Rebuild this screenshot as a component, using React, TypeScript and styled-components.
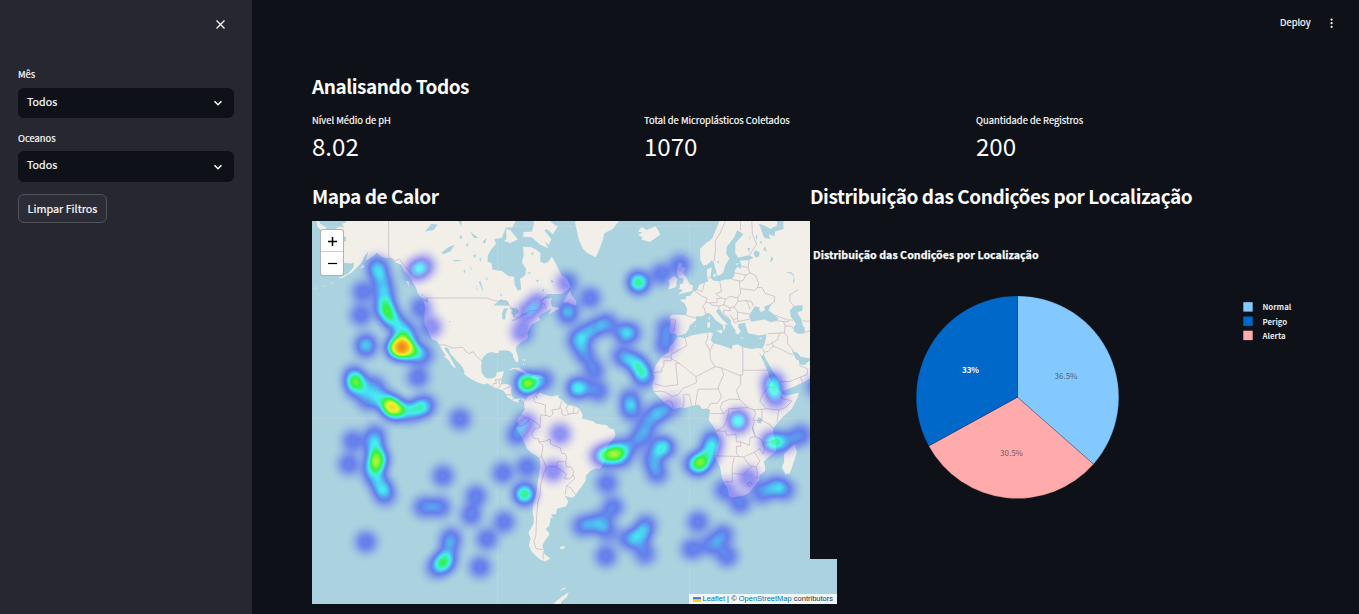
import React from 'react';
import styled, { createGlobalStyle } from 'styled-components';

const FONT = '"Noto Sans CJK SC", "Noto Sans", sans-serif';

const GlobalStyle = createGlobalStyle`
  *, *::before, *::after { box-sizing: border-box; }
  body { margin: 0; background: #0e1117; color: #fafafa; font-family: ${FONT}; overflow: hidden; }
  h2, h3, p { margin: 0; }
`;

const Page = styled.div`
  display: flex;
  width: 100%;
  height: 614px;
  overflow: hidden;
`;

const Sidebar = styled.aside`
  flex: 0 0 252px;
  background: #262730;
  padding: 18px 18px 0;
  display: flex;
  flex-direction: column;
  align-items: stretch;
`;

const CloseRow = styled.div`
  display: flex;
  justify-content: flex-end;
  height: 50px;
  padding: 1px 8px 0 0;
`;

const FieldLabel = styled.label<{ $h: number }>`
  font-size: 9.4px;
  line-height: 13px;
  height: ${(p) => p.$h}px;
  -webkit-text-stroke: 0.2px #fafafa;
`;

const Select = styled.div<{ $gap: number; $h: number }>`
  display: flex;
  align-items: center;
  justify-content: space-between;
  height: ${(p) => p.$h}px;
  margin-bottom: ${(p) => p.$gap}px;
  padding: 0 11px 0 9px;
  border-radius: 6px;
  background: #0e1117;
  font-size: 10.7px;
  line-height: 18px;
  -webkit-text-stroke: 0.2px #fafafa;
  & > span { padding-bottom: ${(p) => p.$h - 28}px; }
`;

const ClearButton = styled.button`
  align-self: flex-start;
  width: 89px;
  height: 29px;
  padding: 0 0 2px;
  border: 1px solid #52535b;
  border-radius: 6px;
  background: #2b2c36;
  color: #fafafa;
  font: 400 10.8px/18px ${FONT};
  white-space: nowrap;
  -webkit-text-stroke: 0.2px #fafafa;
`;

const Main = styled.main`
  flex: 1;
  min-width: 0;
  display: flex;
  flex-direction: column;
`;

const Toolbar = styled.header`
  display: flex;
  justify-content: flex-end;
  align-items: center;
  gap: 16px;
  height: 46px;
  padding-right: 22.5px;
  font-size: 9.3px;
  -webkit-text-stroke: 0.2px #fafafa;
  & > span { padding-bottom: 2px; }
`;

const Content = styled.div`
  padding: 24px 48px 0 60px;
`;

const Heading = styled.h2`
  font-size: 19px;
  font-weight: 700;
  line-height: 32px;
  letter-spacing: -0.45px;
  white-space: nowrap;
  color: #fafafa;
`;

const Metrics = styled.div`
  display: grid;
  grid-template-columns: repeat(3, 332px);
  padding-top: 11px;
  height: 78px;
`;

const MetricLabel = styled.p`
  font-size: 9.4px;
  line-height: 15px;
  -webkit-text-stroke: 0.2px #fafafa;
`;

const MetricValue = styled.p`
  font-size: 24.1px;
  line-height: 36px;
`;

const Panels = styled.div`
  display: grid;
  grid-template-columns: 498px 498px;
`;

const Panel = styled.section`
  min-width: 0;
`;

const MapFrame = styled.div`
  position: relative;
  width: 525px;
  height: 383px;
  margin-top: 9px;
  overflow: hidden;
  background: #aad3df;
  & > svg { display: block; }
`;

const ZoomControl = styled.div`
  position: absolute;
  left: 8px;
  top: 8px;
  width: 24px;
  border: 1px solid rgba(0, 0, 0, 0.3);
  border-radius: 3px;
  background: #fff;
`;

const ZoomButton = styled.div`
  display: flex;
  align-items: center;
  justify-content: center;
  height: 21px;
  padding-top: 1px;
  & + & { height: 24px; padding: 0 0 1px; border-top: 1px solid #ccc; }
`;

const Attribution = styled.div`
  position: absolute;
  right: 0;
  bottom: 0;
  display: flex;
  align-items: center;
  height: 10px;
  padding: 0 4px;
  background: rgba(255, 255, 255, 0.8);
  color: #333;
  font: 7.5px/10px "Liberation Sans", Arial, sans-serif;
  white-space: pre;
  & svg { margin-right: 2px; }
`;

const MapLink = styled.span`
  color: #0078a8;
`;

const ChartFrame = styled.div`
  position: relative;
  z-index: 1;
  height: 338px;
  margin-top: 9px;
  background: #0e1117;
  & > svg { display: block; }
`;

/* Web Mercator, 768px around the world. */
const project = (pair: string) => {
  const [lon, lat] = pair.split(',').map(Number);
  const x = 689.5 + (lon * 768) / 360;
  const y = 418.3 - 122.23 * Math.log(Math.tan(Math.PI / 4 + (lat * Math.PI) / 360));
  return `${x.toFixed(1)},${y.toFixed(1)}`;
};
const path = (line: string) => 'M' + line.trim().split(/\s+/).map(project).join('L');

const LAND = [
  '-160,68.5 -161,67.2 -163,67 -161.8,66.3 -164,66.5 -168,65.6 -166,64.5 -161,64.5 -161,63.6 -164.5,63.1 -166,61.7 -165,60.6 -162.5,59.9 -162,58.7 -158.8,58.5 -157.2,58.8 -157.5,57.5 -160,56 -164.8,54.7 -163,54.8 -160,55.7 -158.4,56.2 -156,57.5 -154,58.5 -153.3,59.2 -152,60.5 -150.5,61.3 -151.8,59.2 -149,60 -146.5,61 -144,60 -140,59.8 -137.5,58.7 -135,58.2 -133.5,56.5 -131,55 -130,54 -128,51.8 -127.5,50.8 -124.5,49.5 -122.8,49 -122.4,47.4 -124.7,48.3 -124,46 -124.3,43 -124.2,40.5 -122.5,37.8 -121.8,36.5 -120.6,34.6 -118.5,34 -117.1,32.5 -116,30.5 -114.8,29 -114.2,28 -115,27.8 -113.5,26.8 -112.2,25.5 -112,24.6 -110.2,23 -109.5,23.2 -110.3,24.3 -111.3,26 -112.5,28 -114.7,30.8 -114.7,31.7 -113,31.2 -112.2,29 -110.5,27.5 -109.3,26 -108,25 -106.3,23.2 -105.5,21.5 -105.5,20.3 -104.3,19.2 -102,17.9 -99.8,16.8 -96.5,15.7 -94.7,16.2 -92.3,14.6 -90,13.8 -87.7,13 -85.8,11.2 -85.5,10 -83.7,9 -83,8.2 -81,7.6 -80,7.4 -80.3,8.3 -79,9 -78,8.2 -77.4,7 -77.5,5.5 -77.2,4 -78.8,2 -78.9,1 -80,0.5 -80.8,-1.5 -80,-3 -81.3,-4.5 -80,-6.5 -78.8,-8.5 -77.5,-11 -76.3,-13.8 -74,-16 -71,-17.7 -70.3,-18.5 -70,-22 -70.5,-25 -71.2,-29 -71.6,-32 -72.5,-35.5 -73.5,-38 -73.5,-41 -73,-42 -73,-44 -74.5,-46 -75.5,-47 -74.5,-49 -75.3,-51 -74,-52.8 -72,-54 -70,-55 -67.5,-55.6 -65.2,-54.8 -68,-53.5 -68.4,-52.3 -69,-51 -67.6,-49.5 -65.8,-48 -66,-47 -67.4,-46 -65.8,-45 -65.3,-43.5 -65,-42 -63.8,-42.5 -65,-41 -62.5,-40.9 -62.2,-39 -58,-38.2 -56.8,-36.5 -57.3,-35.5 -58.4,-34.2 -57,-34.5 -55,-34.9 -53.5,-33.9 -52,-32 -50.2,-30 -48.7,-28.2 -48.6,-26 -46.5,-24 -44.5,-23 -42,-22.9 -41,-21.8 -39.7,-19.5 -39.1,-17 -38.8,-13.5 -37,-11 -35.2,-9 -34.8,-7.5 -35.4,-5.2 -37.2,-4.8 -39,-3.2 -41.5,-2.9 -44,-2.5 -45,-1.5 -48,-0.7 -50.5,-0.2 -50,1.5 -51.5,4.3 -54,5.9 -57,6 -59,8 -61.5,9.8 -62,10.7 -64.5,10.1 -66.5,10.6 -68.5,11.2 -70,12 -71.5,11 -71.7,12.3 -74.5,11 -75.5,10.5 -76.8,8.5 -78.5,9.4 -80,9.3 -82,9 -83.5,10.5 -83.6,13 -83.3,15 -85.5,15.9 -88.3,15.8 -88.2,18 -87.4,20 -87,21.5 -90.3,21.1 -90.7,19.3 -92,18.6 -94.5,18.2 -96,19 -97.4,21 -97.7,23.5 -97.2,27 -95,29 -93,29.7 -90.8,29.2 -89.3,29.3 -89.4,30.3 -86,30.4 -84.2,30 -82.8,28.8 -82.6,27.5 -81.5,25.8 -80.5,25.2 -80.1,27 -81.4,30.5 -81,32 -78.8,33.7 -76.5,34.8 -75.7,35.5 -76,37 -75.2,38.5 -74,40.2 -72,41 -70,41.8 -70.7,43 -69,44 -67,44.8 -66,45.2 -64.5,45.6 -66,43.7 -64,44.6 -61,45.5 -61.5,46 -64.5,46.3 -65,48 -64.5,49 -68,48.7 -71,47 -69,48.7 -66.5,50.2 -60,50.2 -57,51.5 -55.8,52.5 -57.5,54.5 -60,55.5 -62,57.8 -64.5,60.2 -66,59 -68,58.5 -70,59 -69.8,61 -72,61.8 -74,62.3 -78,62.4 -77.7,60.5 -78.5,58.8 -76.6,57.2 -77,55.5 -79.5,54.5 -79,52.5 -79,51.4 -80.5,51.3 -82,52.9 -82.2,55.1 -85,55.3 -88,56.6 -92.5,57 -92.7,58.6 -94.7,59 -94.5,60.5 -93,61.8 -90.7,63 -91.5,64 -88,64.2 -87,65.3 -86,66.3 -83,66.3 -81.5,67.5 -82,69.5 -85,70 -90,72 -160,72',
  '-175,68.5 -173,67 -170,66.2 -172,65.5 -174.5,66.5',
  '-80,72 -72,70 -68,68.5 -64,67 -61.8,66.5 -64,65 -67,66 -68,65.7 -64.8,64 -66,62.8 -68,63.5 -66,62 -70,62.8 -74,64.4 -78,64.5 -77.8,65.4 -73.8,65.5 -73,67 -73,68.3 -77,69.8 -85,72',
  '-87,63.6 -84,63.2 -80.5,63.9 -84,65.8 -86,66 -85.8,64',
  '-56,72 -54,69.5 -53.5,67 -52,64 -50,62 -48,61 -44,60 -42.5,61.5 -40.5,64 -40,65.2 -36,66 -32,68 -25,69 -20,72',
  '-24.3,65.5 -22.3,66.4 -20.3,65.8 -16,66.5 -14.7,65.8 -13.7,64.9 -18.7,63.4 -22.6,63.9 -22,64.3 -24,64.9 -22,65.3',
  '-59.3,47.7 -57,47.6 -55,46.9 -53.1,46.7 -53,48 -55.5,50 -56,51.5 -58,49',
  '-128,50.8 -125,50 -123.3,48.5 -126,49.3',
  '-133,54 -131.7,54 -131.2,52.2',
  '-154.5,57.2 -152.3,57.6 -153,58.3',
  '-84.9,21.9 -83,23 -80,23.1 -77,21.5 -74.2,20.2 -77.5,19.9 -78,20.8 -82,22.6',
  '-74.4,18.4 -73.3,19.9 -70,19.8 -68.4,18.6 -71,18',
  '-78.3,18.3 -76.3,18.2 -77,17.8', '-67.2,18.4 -65.7,18.4 -66,18', '-78.2,25 -77.9,24 -77.5,24.8', '-78.7,26.7 -77,26.6 -77.2,25.9',
  '-5.5,50.1 1.3,51.1 1.6,52.7 0.2,53 -1.5,55 -3,56 -2,57.6 -4,57.7 -3.2,58.6 -5,58.6 -6,56.5 -4.8,54.8 -3,54.8 -3,53.4 -4.5,53 -4.5,52 -5.2,51.8 -3,51.4',
  '-10,51.6 -6.4,52.2 -6,53.8 -5.6,54.6 -7.4,55.3 -10,54.2 -9.2,53.1',
  '20,72 15,68.5 12.5,66 10.5,64 8,63.3 5,62 5,59.5 6.5,58 8.3,58.2 10.5,59.3 11.3,58.9 12.5,56.5 13,55.4 14.3,55.6 16,56.3 16.7,58 18.8,59.8 17.2,60.8 17.5,62.4 21,64.4 22.3,65.8 25.3,65 21.5,63.2 21.4,61 22.8,59.9 28,60.5 30,59.9 28,59.4 23.5,59.2 24.3,58.3 24.2,57.1 22.6,57.7 21.2,56.8 21,55.3 19.8,54.5 16,54.3 14,53.9 11,54.1 9.8,55 10.5,57.6 8.2,57 8.3,55 8.8,53.9 7,53.4 4.7,53 3.5,51.4 1.6,50.8 0.2,49.6 -1.6,49.6 -1.5,48.6 -4.6,48.5 -2.2,47.2 -1.1,45.5 -1.6,43.4 -8,43.7 -9.2,43 -8.8,41 -9.4,38.7 -8.9,37 -6.4,36.8 -5.5,36 -2,36.8 -0.4,38.5 -0.2,39.7 3.1,41.8 3,43.1 6,43.1 8.8,44.4 10.3,43.5 12.2,41.8 15.6,40 16,38 16.8,39 16.8,40.4 18.4,40 16,41.6 13.7,43.5 12.4,44.8 13.6,45.6 14.5,45.2 16,43.5 19.4,41.8 19.4,40.4 21.5,38.2 21.5,37 23,36.5 24,37.8 22.8,39.3 23,40.5 26,40.8 26.3,39.8 27,38 27.5,37 30.5,36.5 32.5,36.1 36,36.7 35.8,35 34.8,32 33.8,31.1 32,31.3 29,30.9 25,31.6 22.5,32.8 20,32.3 20,30.8 15.5,32.2 11.2,33.3 10,34.2 11,37 9.5,37.3 5,36.8 0,35.9 -2,35.1 -5.5,35.8 -6.8,34 -9.6,31.5 -9.8,29.7 -13,27.7 -16,23.9 -17,21 -16.3,19 -17.5,14.7 -16.8,12.4 -13.3,9 -11.4,6.9 -7.5,4.4 -4,5.2 -2,4.8 1,5.9 4.4,6.3 6,4.3 8.5,4.6 9.6,3.9 9.3,1 9,-0.8 12,-5 12.3,-6.1 13.4,-8.7 13.7,-11 12.5,-13.5 11.8,-17.5 14.4,-22.5 15.2,-27 18.2,-32 18.4,-34.2 20,-34.8 25.6,-34 28,-32.9 31.2,-29.5 32.8,-27.5 32.8,-25.8 35.4,-24 35.4,-22 34.8,-19.8 37,-17.8 40.5,-15.5 40.6,-11 39.3,-7.5 39.2,-4.8 41.5,-1.8 44,1 48,4.5 51,10.5 51.2,11.9 45,10.5 43.2,11.5 43,12.7 39.5,15.3 37.3,19 37,21 35.5,24 33.5,27.8 32.5,29.8 34,27.8 35,29.5 35,28 39,21.5 42.8,16.5 43.4,12.7 45,13 52,16 55,17.5 57.5,19 59.8,22.4 56.5,24.5 56.3,26.2 54,24.2 51.5,24.4 51.3,26 50,26.7 48,30 50.5,29.5 52,27.8 56.5,27 57.3,25.7 66,25.3 70,25 70,72',
  '49.3,-12 50.4,-15.7 47,-25 45,-25.5 43.3,-22.5 44.4,-20 44.3,-16.5',
  '8.3,41 9.6,41 9.6,39.2 8.5,39', '8.7,42.6 9.5,43 9.4,41.5', '12.5,38 15.5,38.2 15.1,36.8', '23.6,35.4 26.2,35.2 24,35', '32.4,35 34.4,35.6 33.5,34.7', '2.4,39.6 3.3,39.8 3,39.3',
  '10.8,55.6 12.5,56 12,54.9', '22,58.6 23.2,58.6 22,58',
  '-61,-51.8 -60,-51.3 -58,-51.5 -59.5,-52.2',
  '-64.5,-66 -63,-64.9 -60,-63.9 -56.6,-62.9 -57.5,-63.9 -60,-64.8 -61,-66', '-61,-62.6 -59.8,-62.2 -58,-61.8 -58.2,-62.2',
  '-166.5,53.8 -168.5,53 -167,53.4', '-171,52.7 -172.5,52.3 -171,52.4', '-174,52.2 -176.8,51.8 -175,51.9', '-171,63.5 -169,63.2 -171,63.2',
  '-61.8,10.7 -61,10.8 -61.2,10.1', '-16.8,28.2 -16.2,28.5 -16.4,28', '-14,28.6 -13.8,28.9 -14,28.2', '-1.5,60.4 -1,60.5 -1.2,60',
];

const WATER = [
  '27.9,42.8 28.7,44.3 30.7,46.4 33,46 32.6,45.4 33.5,44.5 35.4,45.2 35,46.3 38.5,47.2 37.6,46 37,45 39,44 41.5,42.4 41.5,41.5 38,41 35,42 32,41.6 29,41.2',
  '47,45 49,46.5 53,46.8 53,45 51,44.5 50.5,44.4 52.5,42 53,40 54,39 54,37 51,36.7 49,37.6 49,39.5 50,40.4 48.5,42 47.5,43',
  '41,66.7 38,66 35,66.7 32.5,67 35,64.3 38,64 37,65 40,64.6 40,65.5 44,66 44,69 41,68',
  '30,61 31,61.6 32.8,61.2 32.6,60.2 31,59.9', '34.5,61.8 35.5,62.5 36.3,61.2', '12.8,58.8 13.8,59.3 13.6,58.5', '27,62 28.5,62.2 28,61.3',
  '28,64.5 28.6,64.6 28.3,63.8', '31,64.5 31.8,65 31.6,63.6', '33,63.5 34,63.6 33.6,62.8', '38.5,60.4 39.2,59.4 37.8,58.8',
  '45,56.2 47.5,56 49,55.2 49.3,54 48.4,53 49,55.6 47.6,56.4',
  '-92,46.7 -88.5,48.6 -85,47.9 -84.6,46.6 -87.5,46.7', '-87.8,42 -86.3,42 -86.2,44 -85,45.8 -87,45.7 -87.8,44', '-84.5,46 -81,45.8 -80,44.6 -81.7,43.3 -82.5,43.2 -83.6,44 -83.3,45.2', '-83.4,41.7 -79,42.8 -80,42.2 -82.5,41.4', '-79.7,43.3 -76.3,44 -76.5,43.5',
  '-124,65.5 -121,67 -118,66.8 -120,65.8', '-116.5,61 -113,62.3 -110,62.8 -112,61.4 -115,60.8', '-111,59.4 -106,59.4 -109.5,59', '-98.8,53.8 -97.5,52 -96.6,50.5 -97,52 -97.9,53.9', '-100,52.8 -99,51 -99.8,51.8', '-103,58.2 -101.7,56.7 -102.4,57',
  '-108,64.2 -107,65 -106.6,64', '-105,62.8 -103.6,63.2 -104,62.4', '-101.4,60.5 -100,60.8 -100.6,59.8', '-98.6,59.6 -97.6,59.8 -98,58.9', '-106,56.6 -105,57.2 -105.4,56', '-95.5,54.6 -94.5,55 -95,54', '-88.8,50.4 -87.8,50 -88.6,49.4', '-76,56.2 -74.4,56.4 -75,55.8', '-72,54.2 -70.6,54.4 -71.2,53.5', '-65,54.4 -63.6,53.8 -64.6,53.4', '-74.4,61 -73,61.2 -73.6,60.4', '-69,51.8 -68,51.4 -68.8,50.8', '-112.8,41.5 -112,41.4 -112.4,40.8',
  '-116,72 -115,68.2 -109,67.8 -107,66.6 -106.5,68.5 -98,67.8 -95,68.2 -96,72', '-103,65.5 -99,64.3 -101,64.2', '-97,63.5 -95,64.2 -96,63',
  '32,0.5 34,0.2 33.6,-2.5 31.8,-2.2', '29.3,-3.5 30,-5 31,-8.5 29.5,-6', '34,-10 34.8,-12 35.2,-14.3 34.4,-12.5', '58.3,45 60,46 61,45.2 59,43.8',
  '-71.8,10.6 -71.2,10.6 -71.3,9.3 -72,9.6',
];

const BORDERS = [
  '-141,72 -141,60 -138,59.2 -136,59.6 -133,57.5 -130,56', '-123,49 -95,49 -92,48.3 -89.5,48 -86,48.2 -84.3,46.5 -82.4,45.3 -82.4,42.8 -79,42.8 -79,43.4 -76,44.3 -74.7,45 -71.5,45 -70.3,45.8 -69.2,47.4 -67.8,47 -67,45',
  '-117,32.5 -114.8,32.5 -111,31.3 -108,31.4 -106.5,31.7 -104.5,29.6 -103,29 -101.5,29.8 -99.5,27.5 -97.2,25.9',
  '-92.2,14.6 -92,16 -90.5,16.2 -91,17.8 -89.2,17.8 -88.3,18.4', '-89.2,17.8 -89.2,15.9 -88.3,15.8', '-90,13.8 -89.3,14.4 -88.5,15.5', '-87.5,13 -86,14 -83.2,15', '-85.7,11.1 -83.7,10.9', '-82.9,8.2 -82.6,9.5', '-77.2,8.6 -77.8,7.3',
  '-71.5,12 -73,9.2 -72.4,7.4 -70,7 -67.5,6.1 -67.8,2.8 -67,1.2 -69.8,1.7 -70,-4.2 -71.5,-2.3 -75.2,0 -77.5,0.4 -78.8,1.4', '-75.2,0 -75.6,-1.5 -78.3,-3.4 -80.3,-3.5', '-67,1.2 -65.5,0.8 -64,2 -64.5,4 -61,4.4 -60.7,5.2 -60,8', '-60.7,5.2 -59.8,4 -59.8,2 -58.8,1.3 -56.5,1.9 -57.9,4.6 -57,6', '-56.5,1.9 -54.6,2.3 -54,5.7', '-54.6,2.3 -52.7,2.3 -51.6,4.2',
  '-70,-4.2 -72.8,-5 -74,-7.5 -72.7,-9.5 -70.6,-9.5 -70.6,-11 -68.7,-12.5 -69,-15.5 -69.5,-17.5 -70.4,-18.3', '-70.6,-11 -68,-10.7 -65.4,-9.8 -65,-12 -60.5,-13.8 -60,-16.2 -58.3,-16.3 -57.6,-18 -58,-20.1 -61.8,-19.7 -62.6,-22.2 -66,-22 -67,-22.8 -68.4,-19.5 -69.5,-17.5', '-58,-20.1 -57.8,-22.1 -55.5,-22.3 -54.3,-24 -54.6,-25.6 -56,-27.3 -58.6,-27.3 -57.7,-25.3 -62.6,-22.2', '-54.6,-25.6 -53.8,-27.2 -57.6,-30.2 -58.3,-33.8', '-57.6,-30.2 -55.8,-30.9 -53.4,-33.7', '-67,-22.8 -68.4,-25 -69.8,-30 -70,-33.5 -71,-36.5 -71.5,-40 -71.8,-44 -72,-48 -73,-50 -72,-52 -68.5,-52.3', '-68.6,-52.7 -68.6,-54.9',
  '-2,35.1 -1.2,32.2 -8.6,28.7 -8.6,27.6 -13,27.6', '-8.6,27.6 -8.6,26 -12,26 -12,23.5 -13,23 -13,21.3 -17,21', '-8.6,27 -4.8,25 -6.5,25 -5.5,15.5 -12,14.8 -16.4,16', '-4.8,25 3,19.2 3.3,16.5 0,15 -3,14 -5.3,11 -8,10.2 -11.3,12.2 -13.7,12.6 -16.7,12.4', '3,19.2 12,23.5 9.8,26.5 9.5,30.3 7.5,33.5 8.5,35 8.6,37', '9.5,30.3 11.5,33.2', '12,23.5 15,23 24,19.5 24,20 25,20 25,31.6', '25,22 36.8,22', '15,23 16,20 13.5,14.5 13.5,13.6 4,13.5 3.6,11.5 2.7,6.3', '13.5,13.6 15,10 13,7 10,7 8.6,4.7', '24,19.5 24,15.7 22,13 23.5,8.8 19,9 15.5,7.5 14.5,5 16,2.2 13.2,2.2 9.8,2.2', '23.5,8.8 27.4,5 30,4 34,4.2 36,4.5 33,8 34.2,11 36.5,14.3 38.5,18', '36.5,14.3 40,14.5 43,12.5', '36,4.5 41.8,4 45,5 48,8 43,9.5 42.5,11', '41.8,4 41,-1.7', '34,4.2 34,0 34,-1 37.7,-3 39.2,-4.7', '34,-1 30.5,-1 29.5,-4.4 30.8,-8.5 33,-9.5 34.7,-11.6 40.4,-10.6', '30,4 31,2.3 29.6,-1.4', '16,2.2 18.5,4.5 27.4,5', '18.5,4.5 17.8,0 16,-4 12.5,-5.9 17,-6 17.5,-8 21.8,-7.4 22,-11 24,-11 24,-13 22,-13 22,-16.3 23.4,-17.6 11.8,-17.3', '24,-11 28,-12.5 28.5,-9 30.8,-8.5', '23.4,-17.6 25.3,-17.8 30.3,-15.7 33,-14 34.5,-16.5 35.5,-14', '25.3,-17.8 28,-21.5 31.2,-22.3 33,-19.5 30.3,-15.7', '21,-18 20,-22 20,-28.5 16.5,-28.5', '20,-24.8 23,-25.3 25.7,-25.4 28,-22.8 29.5,-22.2', '31.2,-22.3 32,-25.8 31,-27 32.8,-26.9', '27,-29.5 28.5,-28.7 29.3,-29.5 28,-30.6 27,-29.5',
  '-7.5,4.4 -8.4,7.6 -10.3,8.4 -11.4,7', '-3,5.1 -2.5,8 -2.8,11 0,11 1,6', '-1.8,43.4 3.1,42.4', '-8.8,41.9 -6.5,41.8 -7,39.5 -7.4,37.2', '2.5,51 6,49.5 8.2,49 7.6,47.6 6,46.2 7,45.8 7.5,43.8', '3.5,51.4 6,51 7,53.3', '7.6,47.6 9.6,47.5 13,47.6 12.8,48.8 15,49 12.3,50.3 15,51 14.2,53.9', '9.6,47.5 10.4,46.8 13.7,46.5 13.8,45.6', '15,49 17,48.7 19,49.5 22.5,49.1 24,50.5 23.6,52.5 23.5,54 19.8,54.4', '17,48.7 16.1,46.9 18.8,45.9 21,46.2 22.8,48 22.5,49.1', '16.1,46.9 13.7,46.5', '18.8,45.9 19.2,44.9 16,45.2 16,44 18.5,42.5', '21,46.2 22.5,44.5 28.6,43.8', '22.5,44.5 22.5,42.3 20.5,42 20,42.5 19.2,43.5', '22.5,42.3 22.9,41.3 26.3,41.8 28,42', '20.5,42 21,40.8 22.9,41.3', '22.8,48 26.6,48.2 28.2,46 28.2,45.4', '26.6,48.2 29,48 30,46.4', '24,51.8 30.6,51.3 31.8,52.1 34,52.2 35.4,50.4 40,49.5 39.8,47.8 38.2,47.1', '31.8,52.1 32.5,53.4 30.8,55.6 28.2,56.2 26.5,55.6 25,54 23.5,54', '28.2,56.2 27.5,57.5 28,59.4', '27.3,57.5 24.3,57.9', '26.5,55.6 21,56.2', '28,60.5 31.5,62.9 29.5,65 29,69', '11.5,59 12.2,61.5 12,63.5 14.5,65.3 18,68.5', '24,65.8 23.7,68', '8.6,54.9 9.8,54.8',
  '41.5,41.5 44,41.2 44.8,39.7 44.5,37.2 42.4,37.1 36.7,36.8', '40,43.5 46,41.8 48.5,41.8', '44,41.2 46.5,41.2', '44.8,39.7 48,39.6 48.8,38.4', '42.4,37.1 41,34.4 38.8,33.4 36.8,32.3 35.7,32.8', '44.5,37.2 46,35.5 46,33 48,31 48.5,30', '38.8,33.4 39.2,32 42,31.1 46.5,29.1 48.4,28.5', '35,29.5 37,30 39.2,32', '34.3,31.2 35,29.5', '43,17 47,17 52,19 55,20 55.5,22.5 51.5,24', '52,19 53,16.6', '49,46.5 47,48 47,50 51,51.5', '54,37.3 57,38 61,36.5 62,30 61.7,25.3', '53,41.5 56,41.3 58,42.6 62,39 66.5,37.4',
];

/* x, y and an optional weight */
const HEAT: number[][] = [
  [377, 266, 0.8], [378, 271, 0.8], [415, 271], [424, 266], [383, 283], [385, 296], [363, 292], [361, 315], [384, 307], [388, 313], [393, 321], [403, 329], [408, 338], [396, 348], [398, 348], [399, 346], [406, 351], [412, 351], [423, 355], [421, 308], [431, 327], [366, 343, 0.8], [366, 348, 0.8], [418, 377],
  [354, 376], [356, 382], [356, 389, 0.9], [374, 386], [368, 400], [383, 399], [390, 406], [393, 407], [395, 411], [426, 405], [418, 409], [407, 412], [460, 419], [353, 441], [349, 464], [375, 435], [374, 447], [378, 457], [378, 462], [373, 468, 0.9], [373, 476, 0.7], [381, 485], [385, 495], [443, 476], [424, 507], [440, 507], [476, 496], [471, 515], [487, 539], [480, 567], [451, 538], [449, 549, 0.6], [446, 560], [443, 564, 0.8], [436, 568, 0.8], [366, 542],
  [567, 283], [590, 298], [568, 308, 0.8], [568, 316, 0.8], [638, 281], [639, 284], [661, 274], [680, 265], [538, 303], [527, 313], [522, 332], [525, 382], [527, 386], [530, 382, 0.6], [543, 380], [577, 341], [585, 334, 0.85], [595, 328, 0.85], [607, 323], [623, 333, 0.9], [631, 333, 0.9], [585, 354], [594, 370], [576, 388, 0.9], [580, 388, 0.9], [598, 391], [622, 356], [634, 361], [641, 369], [644, 378], [630, 399], [631, 411],
  [667, 328], [665, 345], [773, 381, 0.85], [773, 387, 0.85], [776, 398], [817, 386], [660, 412, 0.9], [672, 407, 0.7], [738, 419, 0.9], [738, 423, 0.9], [526, 423], [517, 435], [560, 434], [553, 471], [527, 467], [503, 473], [524, 493], [525, 495], [504, 522],
  [600, 456, 0.9], [607, 455, 0.8], [615, 450, 0.8], [622, 450, 0.8], [613, 458, 0.7], [623, 458, 0.7], [634, 443, 0.7], [642, 436, 0.7], [646, 427, 0.8], [652, 416, 0.7], [660, 446, 0.9], [666, 448, 0.9], [652, 459], [657, 473], [607, 483], [613, 507], [582, 526, 0.9], [593, 524, 0.7], [602, 521, 0.8], [608, 532, 0.8], [606, 556], [646, 525, 0.9], [642, 534, 0.7], [638, 540, 0.6], [628, 539, 0.9], [645, 554, 0.9],
  [713, 440], [711, 449, 0.8], [708, 457, 0.7], [701, 462], [698, 466], [691, 463, 0.5], [770, 442, 0.9], [775, 443, 0.9], [786, 441, 0.9], [801, 435], [748, 478], [725, 490], [740, 503], [762, 493], [775, 486], [785, 490, 0.9], [698, 522], [723, 535], [711, 545], [692, 549], [727, 556],
];

const PROFILE = [[0, 1], [17, 0.95], [28, 0.84], [39, 0.68], [50, 0.48], [61, 0.3], [72, 0.16], [83, 0.07], [94, 0.02], [100, 0]];

const HeatMap = () => (
  <svg width="525" height="383" viewBox="312 221 525 383">
    <defs>
      <radialGradient id="spot">
        {PROFILE.map(([at, a]) => (
          <stop key={at} offset={`${at}%`} stopColor="#000" stopOpacity={a * 0.425} />
        ))}
      </radialGradient>
      <filter id="heat" filterUnits="userSpaceOnUse" x="312" y="221" width="525" height="383" colorInterpolationFilters="sRGB">
        <feColorMatrix values="0 0 0 1 0  0 0 0 1 0  0 0 0 1 0  0 0 0 1 0" />
        <feComponentTransfer>
          <feFuncR type="table" tableValues="0 0 0 0 0 0 0 0 1 1 1" />
          <feFuncG type="table" tableValues="0 0 0 0 0 .5 1 1 1 .5 0" />
          <feFuncB type="table" tableValues="1 1 1 1 1 1 1 0 0 0 0" />
        </feComponentTransfer>
      </filter>
    </defs>
    <rect x="312" y="221" width="525" height="383" fill="#aad3df" />
    <path d={LAND.map((l) => path(l) + 'Z').join('')} fill="#f2efe9" />
    <path d={WATER.map((l) => path(l) + 'Z').join('')} fill="#aad3df" />
    <path d={BORDERS.map(path).join('')} fill="none" stroke="#b9a0b8" strokeWidth="0.7" strokeLinejoin="round" opacity="0.75" />
    <path d="M312 418.5H837M497.5 221V604M689.5 221V604M312 226.5H837" stroke="#e8e4e4" strokeWidth="0.7" opacity="0.3" />
    <g filter="url(#heat)">
      {HEAT.map(([x, y, w = 1], i) => (
        <circle key={i} cx={x} cy={y} r="20.5" fill="url(#spot)" fillOpacity={w} />
      ))}
    </g>
  </svg>
);

const CX = 207.5;
const CY = 176.2;
const R = 101.3;
const slice = (from: number, to: number) => {
  const pt = (f: number) => `${CX + R * Math.sin(2 * Math.PI * f)} ${CY - R * Math.cos(2 * Math.PI * f)}`;
  return `M${CX} ${CY}L${pt(from)}A${R} ${R} 0 0 1 ${pt(to)}Z`;
};

const ChartText = styled.text<{ $size?: number; $bold?: boolean }>`
  font-family: ${FONT};
  font-size: ${(p) => p.$size ?? 8}px;
  font-weight: ${(p) => (p.$bold ? 700 : 400)};
`;

const LEGEND = [
  { name: 'Normal', color: '#83c9ff', y: 86, dy: 3 },
  { name: 'Perigo', color: '#0068c9', y: 100.3, dy: 3.7 },
  { name: 'Alerta', color: '#ffabab', y: 114.5, dy: 3.5 },
];

const PieChart = () => (
  <svg width="498" height="338" viewBox="0 0 498 338">
    <ChartText x="3" y="38" $size={10.7} $bold fill="#fafafa" stroke="#fafafa" strokeWidth="0.25">Distribuição das Condições por Localização</ChartText>
    <g stroke="#0e1117" strokeOpacity="0.4" strokeWidth="0.5">
      <path d={slice(0, 0.365)} fill="#83c9ff" />
      <path d={slice(0.365, 0.67)} fill="#ffabab" />
      <path d={slice(0.67, 1)} fill="#0068c9" />
    </g>
    <ChartText x="256" y="158" textAnchor="middle" fill="#4b6473">36.5%</ChartText>
    <ChartText x="201.5" y="235" textAnchor="middle" fill="#7a5a5c">30.5%</ChartText>
    <ChartText x="160.5" y="152" textAnchor="middle" $bold fill="#fff">33%</ChartText>
    {LEGEND.map((l) => (
      <g key={l.name}>
        <rect x="433.3" y={l.y - 4.8} width="9.4" height="9.4" fill={l.color} />
        <ChartText x="452.5" y={l.y + l.dy} $size={7.8} $bold fill="#e8e9eb">{l.name}</ChartText>
      </g>
    ))}
  </svg>
);

const Chevron = () => (
  <svg width="10" height="10" viewBox="0 0 10 10" fill="none" stroke="#fafafa" strokeWidth="1.5">
    <path d="M1.5 3.2L5 6.7L8.5 3.2" />
  </svg>
);

const METRICS = [
  ['Nível Médio de pH', '8.02'],
  ['Total de Microplásticos Coletados', '1070'],
  ['Quantidade de Registros', '200'],
];

export default function App() {
  return (
    <Page>
      <GlobalStyle />
      <Sidebar>
        <CloseRow>
          <svg width="11" height="11" viewBox="0 0 11 11" stroke="#fafafa" strokeWidth="1.3">
            <path d="M1.5 1.5L9.5 9.5M9.5 1.5L1.5 9.5" />
          </svg>
        </CloseRow>
        <FieldLabel $h={20}>Mês</FieldLabel>
        <Select $gap={14} $h={30}><span>Todos</span><Chevron /></Select>
        <FieldLabel $h={19}>Oceanos</FieldLabel>
        <Select $gap={12} $h={31}><span>Todos</span><Chevron /></Select>
        <ClearButton>Limpar Filtros</ClearButton>
      </Sidebar>
      <Main>
        <Toolbar>
          <span>Deploy</span>
          <svg width="10" height="10" viewBox="0 0 10 10" fill="#fafafa">
            <circle cx="4.6" cy="1.6" r="1.1" />
            <circle cx="4.6" cy="5.2" r="1.1" />
            <circle cx="4.6" cy="8.8" r="1.1" />
          </svg>
        </Toolbar>
        <Content>
          <Heading>Analisando Todos</Heading>
          <Metrics>
            {METRICS.map(([label, value]) => (
              <div key={label}>
                <MetricLabel>{label}</MetricLabel>
                <MetricValue>{value}</MetricValue>
              </div>
            ))}
          </Metrics>
          <Panels>
            <Panel>
              <Heading as="h3">Mapa de Calor</Heading>
              <MapFrame>
                <HeatMap />
                <ZoomControl>
                  <ZoomButton>
                    <svg width="11" height="11" viewBox="0 0 11 11" stroke="#000" strokeWidth="1.5"><path d="M5.5 1V10M1 5.5H10" /></svg>
                  </ZoomButton>
                  <ZoomButton>
                    <svg width="11" height="11" viewBox="0 0 11 11" stroke="#000" strokeWidth="1.2"><path d="M1 5.5H10" /></svg>
                  </ZoomButton>
                </ZoomControl>
                <Attribution>
                  <svg width="8" height="5" viewBox="0 0 8 5"><path fill="#4c7be1" d="M0 0h8v2.5H0z" /><path fill="#ffd500" d="M0 2.5h8V5H0z" /></svg>
                  <MapLink>Leaflet</MapLink> | © <MapLink>OpenStreetMap</MapLink> contributors
                </Attribution>
              </MapFrame>
            </Panel>
            <Panel>
              <Heading as="h3">Distribuição das Condições por Localização</Heading>
              <ChartFrame>
                <PieChart />
              </ChartFrame>
            </Panel>
          </Panels>
        </Content>
      </Main>
    </Page>
  );
}
